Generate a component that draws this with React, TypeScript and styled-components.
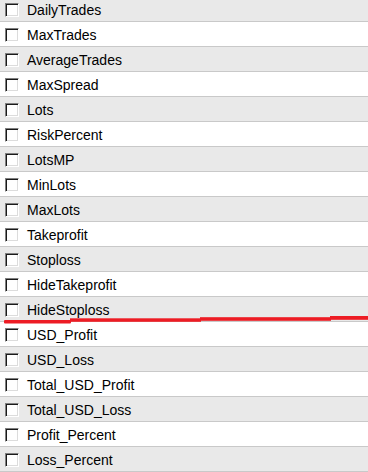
import styled, { createGlobalStyle } from "styled-components";

// Page reset
const GlobalStyle = createGlobalStyle`
    html, body {
        margin: 0;
        padding: 0;
        background: #ffffff;
        overflow: hidden;
    }
`;

// The whole parameter list
const ListDiv = styled.div`
    position: relative;
    width: 368px;
    height: 472px;
    overflow: hidden;
    font-family: "Liberation Sans", Arial, sans-serif;
`;

// Shifted up a little, the first row is cut at the top
const Rows = styled.div`
    display: flex;
    flex-direction: column;
    margin-top: -3px;
`;

// One parameter row, gray on every other line
const Row = styled.div<{ $shaded: boolean }>`
    display: flex;
    align-items: center;
    gap: 8px;
    height: 24px;
    padding-left: 5px;
    border-bottom: 1px solid #c9c9c9;
    background-color: ${(p) => (p.$shaded ? "#e9e9e9" : "#ffffff")};
`;

// Classic sunken checkbox
const CheckBox = styled.span`
    box-sizing: border-box;
    flex: none;
    width: 14px;
    height: 14px;
    margin-top: 1px;
    background: #ffffff;
    border-top: 1px solid #808080;
    border-left: 1px solid #808080;
    border-right: 1px solid #ffffff;
    border-bottom: 1px solid #ffffff;
    box-shadow: inset 1px 1px 0 #1a1a1a, inset -1px -1px 0 #dcdcdc;
`;

// Parameter name
const Label = styled.span`
    font-size: 14px;
    color: #000000;
    white-space: nowrap;
    margin-top: 1px;
`;

// Hand drawn red marker line, over the rows
const Marker = styled.svg`
    position: absolute;
    left: 0;
    top: 0;
    pointer-events: none;
`;

const params = [
    "DailyTrades",
    "MaxTrades",
    "AverageTrades",
    "MaxSpread",
    "Lots",
    "RiskPercent",
    "LotsMP",
    "MinLots",
    "MaxLots",
    "Takeprofit",
    "Stoploss",
    "HideTakeprofit",
    "HideStoploss",
    "USD_Profit",
    "USD_Loss",
    "Total_USD_Profit",
    "Total_USD_Loss",
    "Profit_Percent",
    "Loss_Percent",
];

export default function App() {
    return (
        <>
            <GlobalStyle />
            <ListDiv>
                <Rows>
                    {params.map((name, i) => (
                        <Row key={name} $shaded={i % 2 === 0}>
                            <CheckBox />
                            <Label>{name}</Label>
                        </Row>
                    ))}
                </Rows>
                <Marker width="368" height="472" viewBox="0 0 368 472">
                    <g fill="#ed1c24">
                        <rect x="4" y="320" width="67" height="3.5" rx="1" />
                        <rect x="70" y="318.3" width="131" height="3.5" />
                        <rect x="200" y="317.2" width="131" height="3.6" />
                        <rect x="330" y="316" width="38" height="3.8" />
                    </g>
                </Marker>
            </ListDiv>
        </>
    );
}
